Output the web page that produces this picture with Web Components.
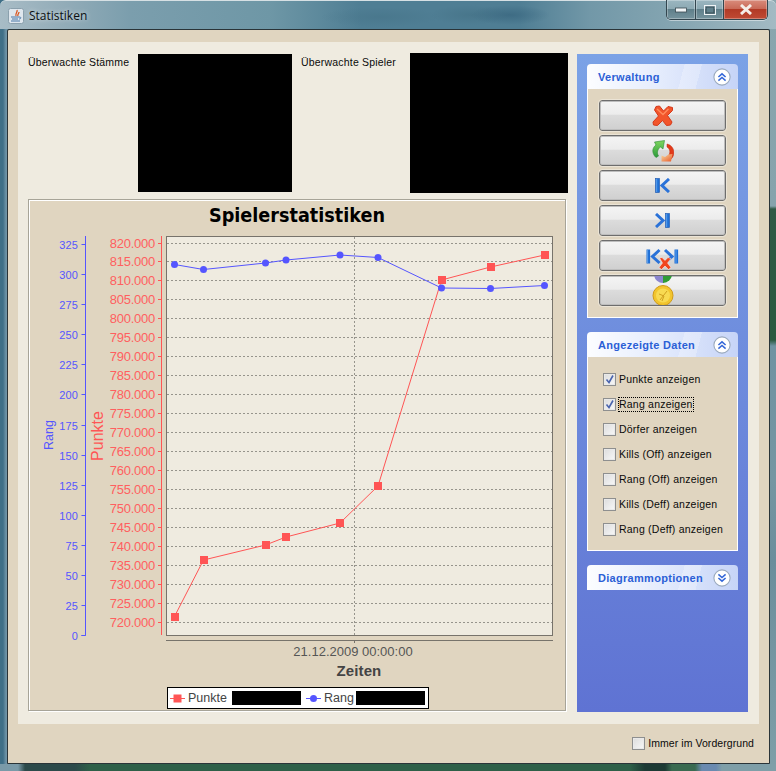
<!DOCTYPE html>
<html>
<head>
<meta charset="utf-8">
<title>Statistiken</title>
<style>
html,body{margin:0;padding:0;background:#3d5f5c;}
body{width:776px;height:771px;overflow:hidden;font-family:"Liberation Sans",Arial,sans-serif;}
</style>
</head>
<body>
<app-window>
  <title-bar slot="title" text="Statistiken"></title-bar>
  <stats-view></stats-view>
</app-window>

<script>
const ICONS = {
  del: `<svg width="22" height="22" viewBox="0 0 22 22"><path d="M4 1.5 L7.5 1 L11.5 6 L16 1.5 L20.5 2.5 L20.5 5.5 L15.5 10.5 L20 17 L18.5 20 L14.5 20.5 L10.5 15.5 L5.5 20.5 L1.5 20 L1 17 L6.5 11 L2.5 5 Z" fill="#f2552b" stroke="#d4391a" stroke-width="1"/><path d="M5 4 L11 9.5 L16.5 4" fill="none" stroke="#ff8a5c" stroke-width="1.5"/></svg>`,
  refresh: `<svg width="22" height="22" viewBox="0 0 22 22"><defs><linearGradient id="gr" x1="0" y1="0" x2="0" y2="1"><stop offset="0" stop-color="#7fd65f"/><stop offset="1" stop-color="#2c9a3a"/></linearGradient><linearGradient id="or" x1="0" y1="0" x2="1" y2="1"><stop offset="0" stop-color="#f6d9a0"/><stop offset="1" stop-color="#ea5a2a"/></linearGradient></defs><path d="M4 17.5 C0 14 -.5 8 4 5 L2.5 2 L12.5 .5 L11 9 L8.5 7 C5.5 9 4.5 13 6.5 16 Z" fill="url(#gr)" stroke="#2b8a36" stroke-width=".6"/><path d="M15 4 C20 5 23 10 21.5 15 C21 17 20 18 19 19 L17 15 C18.5 12 18 9 15 7 Z" fill="#e23a1a" stroke="#bf2a10" stroke-width=".5"/><path d="M20.5 14 L19 21.5 L9.5 21.5 L9.5 15.5 L13 17 L16.5 14.5 Z" fill="url(#or)"/></svg>`,
  first: `<svg width="15" height="15" viewBox="0 0 15 15"><rect x="0.5" y="0.5" width="4" height="14" fill="#1e6fd6" stroke="#1a56b0" stroke-width=".6"/><path d="M1.7 1 v13" stroke="#5ea2ee" stroke-width="1"/><path d="M14 1 L7 7.5 L14 14" fill="none" stroke="#2a72d8" stroke-width="3"/></svg>`,
  last: `<svg width="15" height="15" viewBox="0 0 15 15"><rect x="10.5" y="0.5" width="4" height="14" fill="#1e6fd6" stroke="#1a56b0" stroke-width=".6"/><path d="M11.7 1 v13" stroke="#5ea2ee" stroke-width="1"/><path d="M1 1 L8 7.5 L1 14" fill="none" stroke="#2a72d8" stroke-width="3"/></svg>`,
  both: `<svg width="33" height="28" viewBox="0 0 33 28"><rect x="0.5" y="7.5" width="3.6" height="14" fill="#1e6fd6"/><path d="M1.6 8 v13" stroke="#5ea2ee"/><path d="M13.5 8 L6.5 14.5 L13.5 21" fill="none" stroke="#2a72d8" stroke-width="3"/><rect x="28.5" y="7.5" width="3.6" height="14" fill="#1e6fd6"/><path d="M30 8 v13" stroke="#5ea2ee"/><path d="M19 8 L26 14.5 L19 21" fill="none" stroke="#2a72d8" stroke-width="3"/><path d="M13.5 16 L16 15.5 L19 18.5 L22 15.5 L25 16.5 L21.5 21 L25 25.5 L22.5 27.5 L19 24 L15.5 27.5 L13 25.5 L16.5 21 Z" fill="#f0461f" stroke="#fff" stroke-width=".5"/></svg>`,
  medal: `<svg width="22" height="33" viewBox="0 0 22 33" style="overflow:visible"><path d="M2 0 H12 V9 A9 9 0 0 1 2 0 Z" fill="#8b86cf"/><path d="M11 0 H20 A9 9 0 0 1 11 9 Z" fill="#2f9c35"/><circle cx="11" cy="21.5" r="10" fill="#f2c52e" stroke="#cf9a1a" stroke-width="1"/><circle cx="11" cy="21.5" r="7" fill="#f8da52"/><path d="M8 26 L15 17 M7 20 L12 22 L10 27" fill="none" stroke="#d0a020" stroke-width="1"/></svg>`
};

class AppWindow extends HTMLElement {
  constructor(){
    super();
    this.attachShadow({mode:"open"});
    this.shadowRoot.innerHTML = `
      <style>
      :host{display:flex;flex-direction:column;width:776px;height:771px;box-sizing:border-box;
        background:
          linear-gradient(90deg,#7a9aa8 0,#7a9aa8 18px,#2c4a4a 25px,#2c4a4a 75px,#2e6048 90px,#2e6048 630px,#1d3a34 645px,#1d3a34 665px,#3a6a50 672px,#3a6a50 695px,#6a8ab0 702px,#6a8ab0 716px,#7f9fa8 722px) left bottom / 100% 7px no-repeat,
          linear-gradient(#8aa6ae 0,#86a3ac 206px,#2f5a45 209px,#2a5a3f 340px,#6f93a2 346px,#7596a2 480px,#6b8e9c 560px,#7f9fa8 771px) right top / 6px 100% no-repeat,
          linear-gradient(90deg,#3f6f87 0,#3f6f87 3px,#6e93a6 6px) left top / 7px 100% no-repeat,
          #5d8393;}
      .client{margin:0 6px 7px 7px;flex:1;display:flex;background:#e0d5c0;
        border:1px solid #2a3438;border-radius:2px 2px 0 0;}
      </style>
      <slot name="title"></slot>
      <div class="client"><slot></slot></div>`;
  }
}
customElements.define("app-window", AppWindow);

class TitleBar extends HTMLElement {
  constructor(){
    super();
    this.attachShadow({mode:"open"});
    this.shadowRoot.innerHTML = `
      <style>
      :host{display:flex;align-items:flex-start;height:29px;flex:none;box-sizing:border-box;position:relative;
        border-top:1px solid #d6e0e4;border-radius:6px 6px 0 0;
        background:
          radial-gradient(ellipse 40px 10px at 510px 14px,rgba(55,100,125,.7),transparent 100%),
          radial-gradient(ellipse 40px 10px at 470px 14px,rgba(65,110,130,.5),transparent 100%),
          radial-gradient(ellipse 60px 10px at 380px 16px,rgba(65,110,130,.4),transparent 100%),
          linear-gradient(90deg,#a8bcc6 0,#94adb9 60px,#7b9ead 130px,#6e97a6 270px,#4f7e94 360px,#4f7e94 520px,#7298a8 590px,#86a6b2 680px,#a3bac3 776px);}
      .icon{margin:7px 0 0 8px;width:16px;height:16px;}
      .text{margin:7px 0 0 5px;font:12px/16px "Open Sans","Liberation Sans",sans-serif;color:#0b0f12;
        text-shadow:0 0 5px rgba(255,255,255,.75);}
      .btns{position:absolute;top:-1px;right:8px;display:flex;height:20px;width:102px;box-sizing:border-box;
        border:1px solid #33464f;border-top:none;border-radius:0 0 5px 5px;overflow:hidden;
        box-shadow:0 1px 0 rgba(255,255,255,.45);}
      .b{display:flex;align-items:center;justify-content:center;border-right:1px solid #33464f;
        background:linear-gradient(#9bb6c0,#8daab4 45%,#5f7f8a 50%,#76949e);box-shadow:inset 0 0 0 1px rgba(255,255,255,.3);}
      .b.min{width:28px;}.b.max{width:27px;}
      .b.close{flex:1;border-right:none;background:linear-gradient(#d98c7c,#c96a58 45%,#b23a26 50%,#c04a34);}
      </style>
      <svg class="icon" viewBox="0 0 16 16">
        <rect x=".5" y=".5" width="15" height="15" rx="2" fill="#dfe7ee" stroke="#8ba0ad"/>
        <path d="M9 2 C10 4 7 5 8 8 M11 4 C11 6 9 6 10 8" fill="none" stroke="#d9541e" stroke-width="1.3"/>
        <path d="M3 9 H11 M4 11 H10 M3 13 H12" stroke="#4a78a8" stroke-width="1"/>
        <path d="M11 9 C14 9 13 11 11 11" fill="none" stroke="#4a78a8"/>
      </svg>
      <span class="text">${this.getAttribute("text")}</span>
      <div class="btns">
        <div class="b min"><svg width="12" height="6" viewBox="0 0 12 6"><rect x="0.5" y="1" width="11" height="4" fill="#f0f4f6" stroke="#3a4a52" stroke-width=".8"/></svg></div>
        <div class="b max"><svg width="12" height="10" viewBox="0 0 12 10"><rect x=".5" y=".5" width="11" height="9" fill="none" stroke="#f0f4f6"/><rect x="2" y="2" width="8" height="6" fill="#5f7f8a" stroke="#2f4048" stroke-width=".8"/></svg></div>
        <div class="b close"><svg width="14" height="11" viewBox="0 0 14 11"><path d="M2 1 L12 10 M12 1 L2 10" stroke="#f4ede8" stroke-width="3"/></svg></div>
      </div>`;
  }
}
customElements.define("title-bar", TitleBar);

class BlackBox extends HTMLElement {
  constructor(){
    super();
    this.attachShadow({mode:"open"});
    this.shadowRoot.innerHTML = `<style>:host{display:block;background:#000;flex:none;}</style>`;
  }
}
customElements.define("black-box", BlackBox);

class CheckRow extends HTMLElement {
  constructor(){
    super();
    this.attachShadow({mode:"open"});
    const checked = this.hasAttribute("checked");
    const focus = this.hasAttribute("focused");
    this.shadowRoot.innerHTML = `
      <style>
      :host{display:flex;align-items:center;height:15px;font:10.5px/15px "Liberation Sans",sans-serif;color:#0a0a0a;}
      .box{width:11px;height:11px;border:1px solid #8e8f8f;outline:1px solid #e9e9e9;outline-offset:-2px;flex:none;margin-right:3px;
        background:linear-gradient(135deg,#dcdcdc,#f8f8f8);position:relative;}
      .box svg{position:absolute;left:1px;top:0;}
      .t{padding:0 1px;margin-left:-1px;letter-spacing:var(--ls,.22px);white-space:nowrap;}
      .t.focus{outline:1px dotted #000;outline-offset:-1px;}
      </style>
      <span class="box">${checked ? '<svg width="10" height="11" viewBox="0 0 10 11"><path d="M1.5 5.5 L4 8.5 L8 1.5" fill="none" stroke="#4a64ae" stroke-width="1.6"/></svg>' : ''}</span>
      <span class="t ${focus ? 'focus' : ''}"><slot></slot></span>`;
  }
}
customElements.define("check-row", CheckRow);

class ToolButton extends HTMLElement {
  constructor(){
    super();
    this.attachShadow({mode:"open"});
    this.shadowRoot.innerHTML = `
      <style>
      :host{display:flex;align-items:center;justify-content:center;height:31px;box-sizing:border-box;overflow:hidden;
        border:1px solid #6d6d6d;border-radius:3px;outline:1px solid #ebe4d6;
        box-shadow:inset 0 0 0 1px #bdbdbd;
        background:linear-gradient(#f4f4f4,#ececec 46%,#dcdcdc 48%,#cfcfcf);}
      ::slotted(*){display:block;}
      </style>
      <slot></slot>`;
  }
}
customElements.define("tool-button", ToolButton);

class PaneSection extends HTMLElement {
  constructor(){
    super();
    this.attachShadow({mode:"open"});
    const collapsed = this.hasAttribute("collapsed");
    const chev = collapsed
      ? '<path d="M6 6 L10 9.5 L14 6 M6 10 L10 13.5 L14 10"/>'
      : '<path d="M6 10 L10 6.5 L14 10 M6 14 L10 10.5 L14 14"/>';
    this.shadowRoot.innerHTML = `
      <style>
      :host{display:block;flex:none;}
      .head{display:flex;align-items:center;justify-content:space-between;height:25px;padding:0 7px 0 11px;
        border-radius:4px 4px 0 0;font:bold 11px "Liberation Sans",sans-serif;color:#2b5fd6;letter-spacing:.3px;
        background:
          linear-gradient(105deg,transparent 0,transparent 62%,rgba(255,255,255,.25) 62%,rgba(255,255,255,.25) 73%,transparent 73%),
          linear-gradient(90deg,#fcfdff,#e6edfd 45%,#c6d4f7);}
      .body{background:#e0d5c0;border:1px solid #fff;border-top:none;}
      </style>
      <div class="head"><span>${this.getAttribute("heading")}</span>
        <svg width="18" height="18" viewBox="0 0 20 20"><circle cx="10" cy="10" r="9" fill="#fff" stroke="#9aa9bd" stroke-width="1.2"/><g fill="none" stroke="#3467d8" stroke-width="1.7">${chev}</g></svg>
      </div>
      ${collapsed ? '' : '<div class="body"><slot></slot></div>'}`;
  }
}
customElements.define("pane-section", PaneSection);

class TaskPane extends HTMLElement {
  constructor(){
    super();
    this.attachShadow({mode:"open"});
    this.shadowRoot.innerHTML = `
      <style>
      :host{display:flex;flex-direction:column;gap:14px;box-sizing:border-box;width:171px;height:658px;padding:10px 10px 0;
        background:linear-gradient(#7ba2e6,#5f73d3);flex:none;}
      .buttons{display:flex;flex-direction:column;gap:4px;padding:11px 11px 11px;}
      .checks{display:flex;flex-direction:column;gap:10px;padding:15px 14px 13px 15px;}
      </style>
      <pane-section heading="Verwaltung">
        <div class="buttons" id="buttons"></div>
      </pane-section>
      <pane-section heading="Angezeigte Daten">
        <div class="checks">
          <check-row checked>Punkte anzeigen</check-row>
          <check-row checked focused>Rang anzeigen</check-row>
          <check-row>Dörfer anzeigen</check-row>
          <check-row>Kills (Off) anzeigen</check-row>
          <check-row>Rang (Off) anzeigen</check-row>
          <check-row>Kills (Deff) anzeigen</check-row>
          <check-row>Rang (Deff) anzeigen</check-row>
        </div>
      </pane-section>
      <pane-section heading="Diagrammoptionen" collapsed></pane-section>`;
    const holder = this.shadowRoot.getElementById("buttons");
    ["del","refresh","first","last","both","medal"].forEach(k => {
      const b = document.createElement("tool-button");
      b.innerHTML = ICONS[k];
      holder.append(b);
    });
  }
}
customElements.define("task-pane", TaskPane);

class ChartLegend extends HTMLElement {
  constructor(){
    super();
    this.attachShadow({mode:"open"});
    this.shadowRoot.innerHTML = `
      <style>
      :host{display:flex;align-items:center;align-self:flex-start;box-sizing:border-box;width:262px;height:22px;margin-left:138px;
        background:#fff;border:1px solid #000;padding:0 0 0 2px;font:12.5px "Liberation Sans",sans-serif;color:#444;}
      svg{flex:none;}
      .k{flex:none;white-space:nowrap;margin-left:3px;}
      black-box{height:14px;width:69px;}
      </style>
      <svg width="15" height="9" viewBox="0 0 15 9"><path d="M0 4.5 H15" stroke="#ff5555"/><rect x="3.5" y=".5" width="8" height="8" fill="#ff5555"/></svg>
      <span class="k" style="width:44px">Punkte</span>
      <black-box></black-box>
      <svg width="15" height="9" viewBox="0 0 15 9" style="margin-left:5px"><path d="M0 4.5 H15" stroke="#5555ff"/><circle cx="7.5" cy="4.5" r="3.5" fill="#5555ff"/></svg>
      <span class="k" style="width:32px">Rang</span>
      <black-box></black-box>`;
  }
}
customElements.define("chart-legend", ChartLegend);

class StatChart extends HTMLElement {
  constructor(){
    super();
    this.attachShadow({mode:"open"});
    const punkte = [[174.5,616.5],[203.5,560],[265.5,545],[286,537],[340,523],[378,486],[441.5,280],[490.5,267],[544.5,255]];
    const rang = [[174.5,264.5],[203.5,269.5],[265.5,263],[286,260],[340,255],[378,257.5],[441.5,288],[490.5,288.5],[544.5,285.5]];
    let grid = "", red = "", blue = "";
    for(let i=0;i<=20;i++){
      const y = Math.round(242.5+i*18.95)+.5;
      const v = (820-i*5)+".000";
      grid += `<path d="M167 ${y} H552" class="grid"/>`;
      red += `<path d="M158 ${y} H161.5" stroke="#ff5555"/><text x="155" y="${y+4.5}" class="rt" text-anchor="end">${v}</text>`;
    }
    for(let i=0;i<=13;i++){
      const y = Math.round(635-i*30.07)+.5;
      blue += `<path d="M81.5 ${y} H85.5" stroke="#5555ff"/><text x="78" y="${y+4}" class="bt" text-anchor="end">${i*25}</text>`;
    }
    const line = p => p.map(a=>a.join(",")).join(" ");
    this.shadowRoot.innerHTML = `
      <style>
      :host{display:block;flex:none;}
      svg{display:block;font-family:"Liberation Sans",sans-serif;}
      .grid{stroke:#96948c;stroke-dasharray:2 2;fill:none;}
      .rt{font-size:13px;fill:#ff5f5f;letter-spacing:-.25px;}
      .bt{font-size:11px;fill:#5555ff;letter-spacing:.1px;}
      </style>
      <svg width="536" height="487" viewBox="29 200 536 487">
        <text x="297" y="222" text-anchor="middle" style="font:bold 19px 'DejaVu Sans',sans-serif" textLength="176" lengthAdjust="spacingAndGlyphs" fill="#000">Spielerstatistiken</text>
        <rect x="166.5" y="236.5" width="386" height="399" fill="#efebe0" stroke="#77736b"/>
        ${grid}
        <path d="M354.5 237 V635" class="grid"/>
        <path d="M85.5 236 V635.5 M81.5 635.5 H85.5" stroke="#5555ff" fill="none"/>
        <path d="M161.5 236 V635" stroke="#ff5555" fill="none"/>
        ${red}${blue}
        <text transform="translate(53 435) rotate(-90)" text-anchor="middle" font-size="12.5" fill="#5555ff">Rang</text>
        <text transform="translate(103 436) rotate(-90)" text-anchor="middle" font-size="16" fill="#ff5555">Punkte</text>
        <path d="M166 640.5 H553 M354.5 640 V643" stroke="#77736b" fill="none"/>
        <text x="353" y="656" text-anchor="middle" font-size="13" fill="#555">21.12.2009 00:00:00</text>
        <text x="359" y="676" text-anchor="middle" font-size="15" font-weight="bold" fill="#444" letter-spacing=".1">Zeiten</text>
        <polyline points="${line(punkte)}" fill="none" stroke="#ff5555"/>
        <polyline points="${line(rang)}" fill="none" stroke="#5555ff"/>
        ${punkte.map(a=>`<rect x="${Math.round(a[0]-4)}" y="${Math.round(a[1]-4)}" width="8" height="8" fill="#ff5555"/>`).join("")}
        ${rang.map(a=>`<circle cx="${a[0]}" cy="${a[1]}" r="3.5" fill="#5555ff"/>`).join("")}
      </svg>
      <slot></slot>`;
  }
}
customElements.define("stat-chart", StatChart);

class StatsView extends HTMLElement {
  constructor(){
    super();
    this.attachShadow({mode:"open"});
    this.shadowRoot.innerHTML = `
      <style>
      :host{display:flex;flex-direction:column;flex:1;padding:12px 10px 0;box-sizing:border-box;
        font:10.5px "Liberation Sans",sans-serif;color:#0a0a0a;min-width:0;}
      .panel{display:flex;height:682px;flex:none;box-sizing:border-box;background:#efebe0;padding:12px 10px 0;gap:9px;}
      .left{display:flex;flex-direction:column;width:540px;flex:none;}
      .top{display:flex;height:145px;flex:none;align-items:flex-start;}
      .lab{flex:none;padding-top:2px;line-height:13px;white-space:nowrap;letter-spacing:.19px;}
      .lab.a{width:110px;}
      .lab.b{width:109px;margin-left:9px;}
      .box1{width:154px;height:138px;}
      .box2{width:158px;height:140px;margin-top:-1px;}
      .chart{display:flex;flex-direction:column;width:538px;height:512px;box-sizing:border-box;background:#e0d5c0;
        border:1px solid #a7a498;box-shadow:inset 1px 1px 0 #fff,1px 1px 0 #fff;}
      .foot{display:flex;justify-content:flex-end;align-items:center;flex:1;padding:0 4px 0 0;--ls:.07px;}
      </style>
      <div class="panel">
        <div class="left">
          <div class="top">
            <span class="lab a">Überwachte Stämme</span>
            <black-box class="box1"></black-box>
            <span class="lab b">Überwachte Spieler</span>
            <black-box class="box2"></black-box>
          </div>
          <div class="chart">
            <stat-chart></stat-chart>
            <chart-legend></chart-legend>
          </div>
        </div>
        <task-pane></task-pane>
      </div>
      <div class="foot"><check-row>Immer im Vordergrund</check-row></div>`;
  }
}
customElements.define("stats-view", StatsView);
</script>
</body>
</html>
